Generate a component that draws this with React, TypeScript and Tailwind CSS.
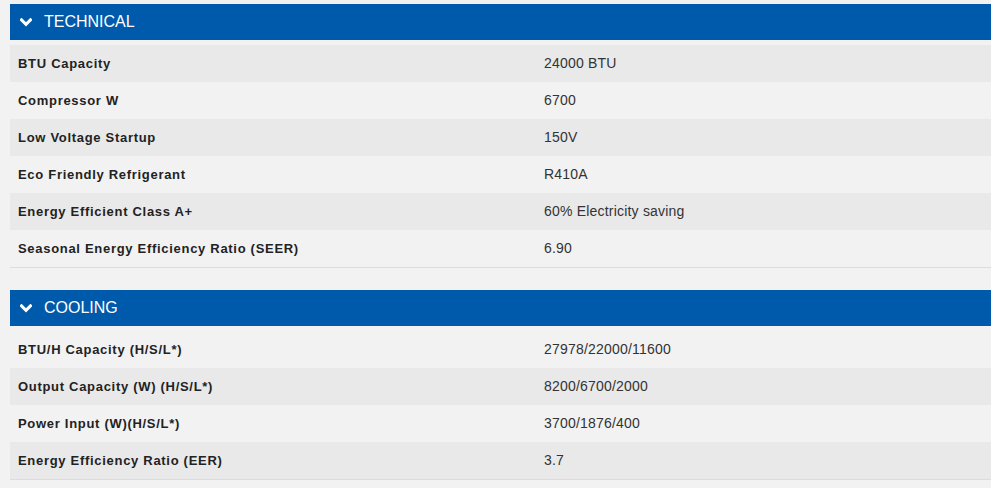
import React from "react";

type Row = { label: string; value: string };

const technical: Row[] = [
    { label: "BTU Capacity", value: "24000 BTU" },
    { label: "Compressor W", value: "6700" },
    { label: "Low Voltage Startup", value: "150V" },
    { label: "Eco Friendly Refrigerant", value: "R410A" },
    { label: "Energy Efficient Class A+", value: "60% Electricity saving" },
    { label: "Seasonal Energy Efficiency Ratio (SEER)", value: "6.90" },
];

const cooling: Row[] = [
    { label: "BTU/H Capacity (H/S/L*)", value: "27978/22000/11600" },
    { label: "Output Capacity (W) (H/S/L*)", value: "8200/6700/2000" },
    { label: "Power Input (W)(H/S/L*)", value: "3700/1876/400" },
    { label: "Energy Efficiency Ratio (EER)", value: "3.7" },
];

function Chevron() {
    return (
        <svg width="12" height="9" viewBox="0 0 12 9" className="shrink-0">
            <path
                d="M1.5 1.8 L6 6.3 L10.5 1.8"
                fill="none"
                stroke="white"
                strokeWidth="3"
                strokeLinecap="square"
            />
        </svg>
    );
}

function Section({
    title,
    rows,
    greyFirst,
}: {
    title: string;
    rows: Row[];
    greyFirst: boolean;
}) {
    return (
        <div>
            <div className="flex h-[36px] items-center gap-[12px] bg-[#005aab] pl-[10px] text-[16px] text-white">
                <Chevron />
                <span>{title}</span>
            </div>
            <div className="mt-[5px] border-b border-[#dcdcdc]">
                {rows.map((r, i) => {
                    const grey = greyFirst ? i % 2 === 0 : i % 2 === 1;
                    return (
                        <div
                            key={r.label}
                            className={`grid h-[37px] grid-cols-[534px_1fr] items-center text-[13px] text-[#222222] ${
                                grey ? "bg-[#e9e9e9]" : ""
                            }`}
                        >
                            <div className="pl-[8px] font-bold tracking-[0.7px]">
                                {r.label}
                            </div>
                            <div className="text-[14px] tracking-[0.2px] text-[#333333]">
                                {r.value}
                            </div>
                        </div>
                    );
                })}
            </div>
        </div>
    );
}

export default function App() {
    return (
        <div
            className="min-h-screen overflow-hidden bg-[#f2f2f2] pl-[10px] pt-[4px]"
            style={{ fontFamily: '"Liberation Sans", Arial, sans-serif' }}
        >
            <Section title="TECHNICAL" rows={technical} greyFirst />
            <div className="mt-[22px]">
                <Section title="COOLING" rows={cooling} greyFirst={false} />
            </div>
        </div>
    );
}
